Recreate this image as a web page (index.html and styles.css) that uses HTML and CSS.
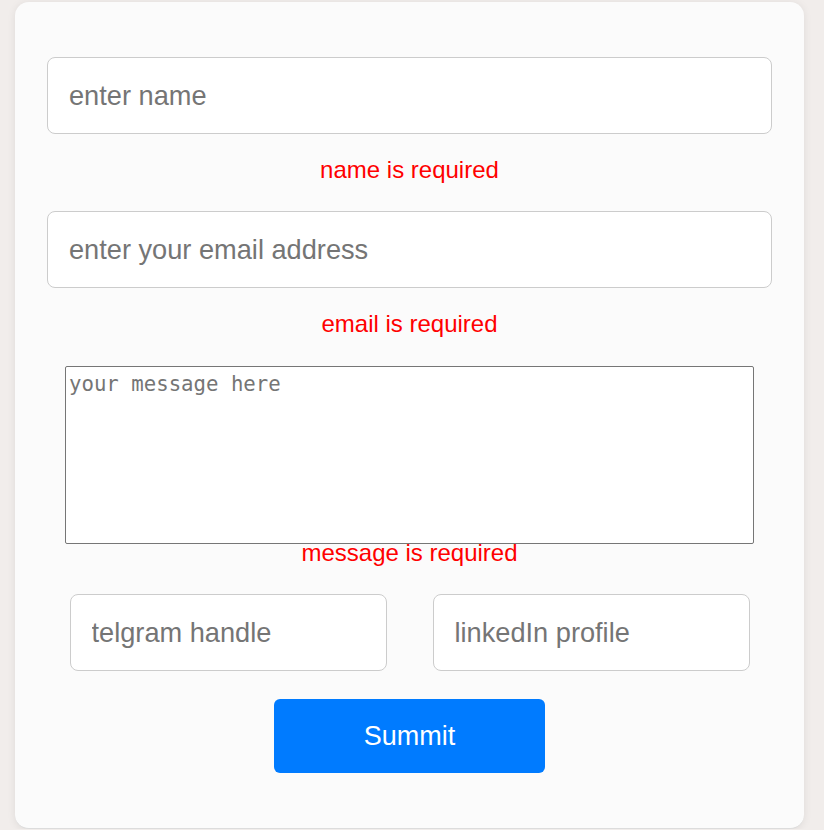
FILE: index.html
```html
<!DOCTYPE html>
<html lang="en">
<head>
<meta charset="utf-8">
<title>Contact form</title>
<link rel="stylesheet" href="styles.css">
</head>
<body>
<div class="page">
  <form class="card" novalidate>
    <input class="field" type="text" placeholder="enter name" autofocus>
    <p class="error">name is required</p>
    <input class="field" type="email" placeholder="enter your email address">
    <p class="error">email is required</p>
    <textarea class="message" placeholder="your message here"></textarea>
    <p class="error error-tight">message is required</p>
    <div class="row">
      <input class="field small" type="text" placeholder="telgram handle">
      <input class="field small" type="text" placeholder="linkedIn profile">
    </div>
    <button class="submit" type="button">Summit</button>
  </form>
</div>
</body>
</html>
```
FILE: styles.css
```css
* { box-sizing: border-box; }
html, body { margin: 0; padding: 0; }
body {
  background: #f1edeb;
  font-family: "Liberation Sans", Arial, sans-serif;
}
.page {
  padding: 2px 20px 0 15px;
}
.card {
  background: #fbfbfb;
  border-radius: 14px;
  box-shadow: 0 1px 8px rgba(0,0,0,0.08);
  border-bottom: 1px solid #dcdcdc;
  padding: 55px 32px 54px;
  display: flex;
  flex-direction: column;
  align-items: center;
  height: 827px;
}
.field {
  width: 100%;
  height: 77px;
  border: 1px solid #cccccc;
  border-radius: 8px;
  background: #ffffff;
  padding: 0 21px;
  font-family: "Liberation Sans", Arial, sans-serif;
  font-size: 27.2px;
  color: #333;
  outline: none;
  caret-color: #000;
}
.field::placeholder { color: #757575; }
.error {
  margin: 22px 0 27px;
  color: #ff0000;
  font-size: 24px;
  line-height: 28px;
  text-align: center;
}
.error-tight { margin: -5px 0 27px; }
.message {
  width: 689px;
  height: 178px;
  margin-top: 1px;
  border: 1px solid #767676;
  border-radius: 2px;
  background: #ffffff;
  padding: 5px 3px 2px;
  font-family: "DejaVu Sans Mono", "Liberation Mono", monospace;
  font-size: 20.7px;
  resize: none;
  display: block;
}
.message::placeholder { color: #757575; }
.row {
  width: 680px;
  display: flex;
  justify-content: space-between;
}
.small {
  width: 317px;
}
.submit {
  margin-top: 28px;
  width: 271px;
  height: 74px;
  border: none;
  border-radius: 6px;
  background: #007bff;
  color: #ffffff;
  font-family: "Liberation Sans", Arial, sans-serif;
  font-size: 27px;
}
```
